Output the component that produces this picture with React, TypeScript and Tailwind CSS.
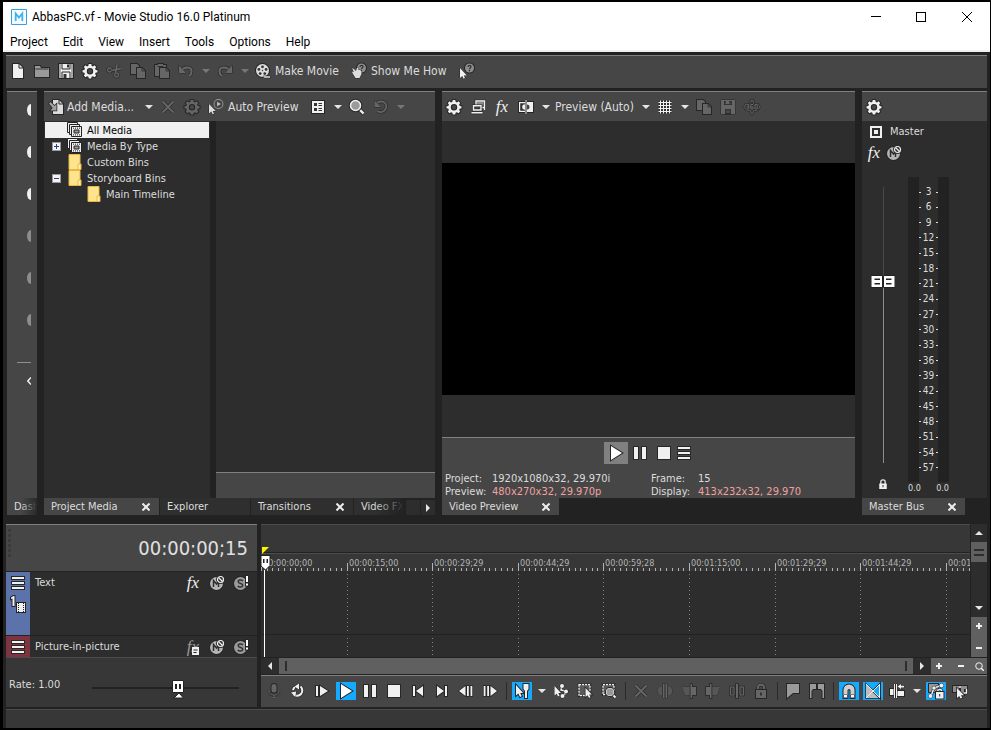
import React from 'react';
import clsx from 'clsx';

type IconProps = { children: React.ReactNode; className?: string };

const Icon = ({ children, className }: IconProps) => (
  <svg
    viewBox="0 0 16 16"
    aria-hidden="true"
    strokeWidth="2"
    className={clsx('size-4 shrink-0 overflow-visible fill-current stroke-[#262626] [paint-order:stroke]', className)}
  >
    {children}
  </svg>
);

const Line = ({ d, width = 1.5 }: { d: string; width?: number }) => (
  <>
    <path d={d} fill="none" strokeWidth={width + 1.6} opacity="0.7" />
    <path d={d} fill="none" stroke="currentColor" strokeWidth={width} />
  </>
);

const FileIcon = () => (
  <Icon>
    <path d="M3 1h6l4 4v10H3z" />
    <path d="M9 1v4h4" fill="none" stroke="#262626" strokeWidth="1" />
  </Icon>
);

const FolderIcon = () => (
  <Icon className="text-[#9a9a9a]">
    <path d="M1 3h5l1 2h8v9H1z" />
    <path d="M1.500 6h13" stroke="#333" strokeWidth="1" />
  </Icon>
);

const SaveIcon = () => (
  <Icon>
    <path d="M1 1h14v14H1z" />
    <path d="M1 1h2v14H1zM13 1h2v14h-2z" stroke="none" opacity="0.6" fill="#777" />
    <path d="M4 1v5h8V1M4 15V9h8v6" fill="none" stroke="#262626" strokeWidth="1" />
    <path d="M9 1.500h2v3H9zM5.500 11h3v4h-3z" fill="#333" stroke="none" />
  </Icon>
);

const GearIcon = () => (
  <Icon>
    <path
      fillRule="evenodd"
      d="M6.700 1h2.600l.3 1.800 1.300.6 1.600-1.100 1.700 1.700-1.100 1.600.6 1.300 1.800.3v2.100l-1.800.4-.6 1.300 1.100 1.600-1.700 1.700-1.600-1.100-1.300.6-.3 1.700H6.700l-.3-1.700-1.300-.6-1.600 1.100-1.700-1.700 1.100-1.600-.6-1.300L.5 9.300V7.200l1.800-.3.6-1.300L1.800 4l1.700-1.700 1.600 1.100 1.300-.6zM8 5a3.200 3.200 0 1 0 0 6.400A3.200 3.200 0 0 0 8 5z"
    />
  </Icon>
);

const CutIcon = () => (
  <Icon>
    <Line d="M3.500 5a2 2 0 1 0 .1 0M10.500 10a2 2 0 1 0 .1 0" width={1.3} />
    <Line d="M5.500 7.500l9.500-2M9.500 10L11 1.500" width={1.6} />
  </Icon>
);

const CopyIcon = () => (
  <Icon>
    <path d="M1 1h6l2 2v8H1z" />
    <path d="M7 5h5l3 3v7H7z" />
    <path d="M12 5v3h3" fill="none" stroke="#333" strokeWidth="1" />
  </Icon>
);

const PasteIcon = () => (
  <Icon>
    <path d="M1 2h3V1h5v1h3v11H1z" />
    <path d="M3.500 3.500h6" stroke="#333" strokeWidth="1" />
    <path d="M6 5h6l3 3v7H6z" />
    <path d="M12 5v3h3" fill="none" stroke="#333" strokeWidth="1" />
  </Icon>
);

const UndoIcon = ({ flip = false }: { flip?: boolean }) => (
  <Icon className={flip ? '-scale-x-100' : ''}>
    <Line d="M3.500 7.500C6 3 14 3.500 13.500 8.500c0 2-1 3.500-2.500 4.500" width={2} />
    <path d="M1 2.500V10h7z" strokeWidth="1" />
  </Icon>
);

const ReelIcon = () => (
  <Icon>
    <circle cx="7.500" cy="7.500" r="6.500" />
    <g fill="#333" stroke="none">
      <circle cx="7.500" cy="3.800" r="1.400" />
      <circle cx="11.100" cy="6.400" r="1.400" />
      <circle cx="9.800" cy="10.600" r="1.400" />
      <circle cx="5.200" cy="10.600" r="1.400" />
      <circle cx="3.900" cy="6.400" r="1.400" />
      <circle cx="7.500" cy="7.500" r="0.700" />
    </g>
    <path d="M8 13.200h7v1.600H9z" strokeWidth="1" />
  </Icon>
);

const QuestionBadge = () => (
  <>
    <circle cx="10.500" cy="5" r="4.500" fill="#8d8d8d" />
    <path d="M9 4c0-2 3-2 3-.2 0 1.200-1.500 1-1.500 2.500M10.500 7v1.200" fill="none" stroke="#2a2a2a" strokeWidth="1.200" />
  </>
);

const HandHelpIcon = () => (
  <Icon>
    <QuestionBadge />
    <path d="M1 5l2 1 2 2 1-3.500 1.500.5V7l1.500 0 1.500 1v3l-2 4H4.500L2 11 .8 8.500l2 .5z" strokeWidth="1" />
  </Icon>
);

const CursorHelpIcon = () => (
  <Icon>
    <QuestionBadge />
    <path d="M1 5v10l2.300-2 1.200 2.800 1.500-.7-1.200-2.600h3z" strokeWidth="1" />
  </Icon>
);

const AddMediaIcon = () => (
  <Icon>
    <path d="M5 1h6l4 4v10H5z" />
    <path d="M11 1v4h4" fill="none" stroke="#262626" strokeWidth="1" />
    <path d="M1 4.500l1.500-1.500L6.500 7 8.500 5v6.500H2.300L4.700 9z" fill="#a0a0a0" strokeWidth="1.500" />
  </Icon>
);

const CrossIcon = () => (
  <Icon>
    <Line d="M2.500 2.500l11 11M13.500 2.500l-11 11" width={1.8} />
  </Icon>
);

const AutoPreviewIcon = () => (
  <Icon>
    <circle cx="10.500" cy="5" r="4" fill="#444" stroke="#9a9a9a" strokeWidth="1.800" />
    <path d="M9.200 2.700v4.600l3.600-2.300z" fill="#c4c4c4" stroke="none" />
    <path d="M1 5v9.500l2.300-2 1.200 2.800 1.500-.7-1.200-2.600h3z" strokeWidth="1" />
  </Icon>
);

const ViewsIcon = () => (
  <Icon>
    <path d="M2 2h12v12H2z" />
    <path d="M4 4h3v3H4zM4 9h3v3H4zM8.500 4h3.500v1H8.500zM8.500 6h3.500v1H8.500zM8.500 9h3.500v1H8.500zM8.500 11h3.500v1H8.500z" fill="#333" stroke="none" />
  </Icon>
);

const MagnifierIcon = () => (
  <Icon>
    <Line d="M10.500 10.500L14.500 14.500" width={2.4} />
    <circle cx="6.500" cy="6.500" r="5" fill="#9a9a9a" stroke="#262626" strokeWidth="3.500" />
    <circle cx="6.500" cy="6.500" r="5" fill="none" stroke="currentColor" strokeWidth="1.500" />
  </Icon>
);

const ResetIcon = () => (
  <Icon>
    <Line d="M3 5.500C7-.5 15 3.500 13 9c-1 4-5.500 5-8.500 3" width={1.8} />
    <path d="M1.500 1.500V8H8z" strokeWidth="1" />
  </Icon>
);

const ExternalIcon = () => (
  <Icon>
    <Line d="M6 6V2h8.500v6.500H12M14.500 8.500v2.500" width={1.4} />
    <path fill="#8d8d8d" stroke="none" d="M7 3h6.500v3.500H7z" />
    <Line d="M3.500 6.700h7.500v4.300h-7.500zM1.500 13.800h11" width={1.4} />
  </Icon>
);

const SplitScreenIcon = () => (
  <Icon>
    <path d="M1 3h6v10H1zM9 3h6v10H9z" />
    <path d="M2.200 4.200H7v1a2.800 2.800 0 0 0 0 5.600v1H2.200z" fill="#333" stroke="none" />
    <path d="M9 5.500a2.500 2.500 0 0 1 0 5z" fill="#444" stroke="none" />
    <path d="M7.500 1h1v14h-1z" strokeWidth="1" />
  </Icon>
);

const GridIcon = () => (
  <Icon>
    <Line d="M3.500 1.500v13M6.500 1.500v13M9.500 1.500v13M12.500 1.500v13M1.500 3.500h13M1.500 6.500h13M1.500 9.500h13M1.500 12.500h13" width={1} />
  </Icon>
);

const Icon360 = () => (
  <Icon>
    <Line d="M8 1c3 1.500 3 12.500 0 14-3-1.500-3-12.500 0-14" width={1} />
    <Line d="M2 5C0 7 0 10 4 11.500h2M14 5c2 2 2 5-2 6.500h-2" width={1} />
    <Line d="M2.500 5.500h2.200v4.500H2.500M3 7.800h1.700M9 5.500H6.800V10H9V7.800H7M11 5.500h2.200V10H11z" width={1} />
  </Icon>
);

const PlayIcon = () => (
  <Icon className="text-white">
    <path d="M3 1l11 7-11 7z" />
  </Icon>
);

const PauseIcon = () => (
  <Icon>
    <path d="M2 2h4v12H2zM10 2h4v12h-4z" />
  </Icon>
);

const StopIcon = () => (
  <Icon>
    <path d="M2 2h12v12H2z" />
  </Icon>
);

const MenuIcon = () => (
  <Icon>
    <path d="M2 2h12v2H2zM2 7h12v2H2zM2 12h12v2H2z" />
  </Icon>
);

const MicIcon = () => (
  <Icon>
    <rect x="5.500" y="1" width="5" height="8.500" rx="2.500" />
    <Line d="M3 6.500v1.500c0 5.500 10 5.500 10 0V6.500M8 12.500V15M5 14.800h6" width={1} />
  </Icon>
);

const LoopIcon = () => (
  <Icon>
    <Line d="M10.500 3.500a5.300 5.300 0 1 1-7 8M5.500 3.500A5.500 5.500 0 0 0 3 7" width={2} />
    <path d="M1 9.500l5-1-.5 5.500zM9 .5v6L4.500 3.500z" strokeWidth="1" />
  </Icon>
);

const PlayFromStartIcon = () => (
  <Icon>
    <path d="M2 3h2v10H2zM6 3l8 5-8 5z" />
  </Icon>
);

const GoStartIcon = ({ flip = false }: { flip?: boolean }) => (
  <Icon className={flip ? '-scale-x-100' : ''}>
    <path d="M3 3h2v10H3zM13 3v10L6 8z" />
  </Icon>
);

const FrameIcon = ({ flip = false }: { flip?: boolean }) => (
  <Icon className={flip ? '-scale-x-100' : ''}>
    <path d="M1 8l6.500-5v10zM9 3h1.800v10H9zM12.500 3h1.800v10h-1.800z" strokeWidth="1.500" />
  </Icon>
);

const EditToolIcon = () => (
  <Icon>
    <path d="M2 2v10.500l2.300-2L6 14l1.700-.8L6.200 10h3z" />
    <path d="M9.500 1h5v5L13 8v7h-2V8L9.500 6z" />
  </Icon>
);

const EnvelopeToolIcon = () => (
  <Icon>
    <Line d="M9 3l-1 4 6 1.500-3.500 4" width={1.5} />
    <g strokeWidth="1">
      <circle cx="9" cy="3" r="2" />
      <circle cx="13" cy="8.500" r="2" />
      <circle cx="9.500" cy="13" r="2" />
      <path d="M1.500 3v9.500l2.200-1.800L5 13.500l1.600-.8L5.300 10H8z" />
    </g>
  </Icon>
);

const SelectToolIcon = () => (
  <Icon>
    <path d="M2 1.700h11v11H2z" fill="#5a5a5a" stroke="#262626" strokeWidth="2.500" />
    <path d="M2 1.700h11v11H2z" fill="none" stroke="currentColor" strokeWidth="1.300" strokeDasharray="2 1" />
    <path d="M8.500 5v9l2-1.700L12 15l1.500-.8-1.300-2.700h2.600z" strokeWidth="1.500" />
  </Icon>
);

const ZoomToolIcon = () => (
  <Icon>
    <path d="M2 1.700h11v10H2z" fill="#5a5a5a" stroke="#262626" strokeWidth="2.500" />
    <path d="M2 1.700h11v10H2z" fill="none" stroke="currentColor" strokeWidth="1.300" strokeDasharray="2 1" />
    <Line d="M11.500 11.500l3 3" width={2} />
    <circle cx="9" cy="9" r="3.500" fill="#999" stroke="#262626" strokeWidth="3" />
    <circle cx="9" cy="9" r="3.500" fill="#999" stroke="currentColor" strokeWidth="1.200" />
  </Icon>
);

const TrimIcon = () => (
  <Icon>
    <path d="M1 6l2-2.500h2.500v9H3L1 10zM15 6l-2-2.500h-2.500v9H13l2-2.500z" opacity="0.5" strokeWidth="1" />
    <path d="M6 1h1.500v14H6zM8.500 1H10v14H8.500z" strokeWidth="1" />
  </Icon>
);

const TrimEndIcon = ({ flip = false }: { flip?: boolean }) => (
  <Icon className={flip ? '-scale-x-100' : ''}>
    <path d="M1 4h8v8H4z" opacity="0.5" strokeWidth="1" />
    <path d="M9.500 1H11v3h4v8h-4v3H9.500z" strokeWidth="1.500" />
  </Icon>
);

const SplitIcon = () => (
  <Icon>
    <Line d="M5 4H1.500v8H5zM11 4h3.500v8H11z" width={1} />
    <path d="M7 1h2v14H7z" strokeWidth="1.500" />
  </Icon>
);

const LockIcon = () => (
  <Icon>
    <Line d="M5 7.500V4c0-3 6-3 6 0v3.500" width={1.8} />
    <path fillRule="evenodd" d="M3 7h10v8H3zM7.200 9.500v3h1.600v-3z" />
  </Icon>
);

const MarkerIcon = () => (
  <Icon className="text-[#9a9a9a]">
    <path d="M2 1h12v9H8l-6 5z" />
  </Icon>
);

const RegionIcon = () => (
  <Icon className="text-[#9a9a9a]">
    <path d="M1 1h6v5H4L2.500 8v7H1zM9 1h6v14h-1.500V8L12 6H9z" />
  </Icon>
);

const SnapIcon = () => (
  <Icon className="text-[#cfcfcf]">
    <path d="M2.500 15V7a5.500 5.500 0 0 1 11 0v8h-4V7.500a1.500 1.500 0 0 0-3 0V15z" />
    <path d="M3 12h3v2.500H3zM10 12h3v2.500h-3z" fill="#fff" strokeWidth="1" />
  </Icon>
);

const CrossfadeIcon = () => (
  <Icon>
    <path d="M1 1l14 14H1zM15 1v14L8 8z" fill="#bdbdbd" strokeWidth="1.500" />
    <path d="M15 1v14L8 8z" fill="#14aaff" />
    <path d="M1 15L15 1M1 1l14 14M14.500 1v14" fill="none" stroke="#eee" strokeWidth="1" />
  </Icon>
);

const RippleIcon = () => (
  <Icon>
    <path d="M1 6h4v6H1zM7 8h8v5H7z" />
    <path d="M5 1h1v14H5zM7 1h1v14H7z" strokeWidth="1" />
    <path d="M8.500 3.500L12 1v1.700h3v1.800h-3V6z" strokeWidth="1" />
  </Icon>
);

const LockEnvelopesIcon = () => (
  <Icon>
    <path d="M1 1h9v8H1z" fill="#999" />
    <Line d="M3 13L6 5l7-2.500" width={1.5} />
    <g strokeWidth="1">
      <circle cx="2.500" cy="13" r="2" />
      <circle cx="6" cy="5" r="1.800" />
      <circle cx="13.500" cy="2.500" r="2" />
    </g>
    <Line d="M9.700 9.500V8c0-2 4-2 4 0v1.500" width={1.3} />
    <path d="M8 9h7.500v6.500H8z" />
    <path d="M11.200 11h1v2.500h-1z" fill="#333" stroke="none" />
  </Icon>
);

const IgnoreGroupingIcon = () => (
  <Icon>
    <path d="M1 3h6v6H1zM9 3h6v3h-3v5H9z" fill="#8d8d8d" />
    <Line d="M7 4h2M7 9h2M12 10h2.500V6" width={1.3} />
    <path d="M5 5v10l2.200-2L8.500 15.500l1.700-.8L9 12.200h3z" strokeWidth="1.500" />
  </Icon>
);

const MuteIcon = () => (
  <Icon className="text-[#b5b5b5]">
    <circle cx="7.500" cy="8.500" r="6.500" />
    <path d="M4.500 12V5.500L7.500 9l2-2.500V12" fill="none" stroke="#2d2d2d" strokeWidth="1.500" />
    <circle cx="11.500" cy="4.500" r="3" fill="#2d2d2d" stroke="#2d2d2d" strokeWidth="3" />
    <circle cx="11.500" cy="4.500" r="3" fill="none" stroke="#eee" strokeWidth="1.200" />
    <path d="M9.500 2.500l4 4" stroke="#eee" strokeWidth="1.200" />
  </Icon>
);

const SoloIcon = () => (
  <Icon className="text-[#9a9a9a]">
    <circle cx="7.500" cy="8.500" r="6.500" />
    <path d="M10 6C8.500 4.500 5 4.700 5.200 6.800 5.400 9 10 8 9.800 10.300 9.700 12.500 6 12.500 4.700 11" fill="none" stroke="#333" strokeWidth="1.500" />
    <path d="M13 1h2v6h-2zM13 8.500h2v2h-2z" fill="#fff" />
  </Icon>
);

const Fx = ({ dim = false }: { dim?: boolean }) => (
  <span className={clsx('font-[Liberation_Serif,serif] text-[17px] leading-4 italic', dim ? 'text-[#999]' : 'text-[#f0f0f0]')}>
    fx
  </span>
);

const StackIcon = () => (
  <Icon>
    <g fill="#f0f0f0" stroke="#222" strokeWidth="1" className="[paint-order:normal]">
      <path d="M.5.5h10v10H.5z" />
      <path d="M2.500 2.500h10v10h-10z" />
      <path d="M4.500 4.500h10v10h-10z" />
      <path d="M7 8h5v3H7z" fill="#999" />
    </g>
    <path d="M6 6.200h7M6 12.900h7" stroke="#222" strokeDasharray="1 1" strokeWidth="1" />
  </Icon>
);

const BinIcon = () => (
  <svg viewBox="0 0 16 16" aria-hidden="true" className="size-4 shrink-0">
    <path d="M2 .5h11v15H2z" fill="#ffe48f" stroke="#e8b93c" />
    <path d="M11 10h3v5.500h-3z" fill="#fff0b8" stroke="#e8b93c" />
  </svg>
);

const Caret = ({ dim = false, className }: { dim?: boolean; className?: string }) => (
  <svg viewBox="0 0 8 4" aria-hidden="true" className={clsx('h-1 w-2', dim ? 'fill-[#777]' : 'fill-[#e6e6e6]', className)}>
    <path d="M0 0h8L4 4z" />
  </svg>
);

type ToolButtonProps = {
  label: string;
  children: React.ReactNode;
  dim?: boolean;
  active?: boolean;
};

const ToolButton = ({ label, children, dim, active }: ToolButtonProps) => (
  <button
    type="button"
    aria-label={label}
    disabled={dim}
    className={clsx('flex h-6 w-6 shrink-0 items-center justify-center', dim ? 'text-[#666]' : 'text-[#f0f0f0]')}
  >
    <span className={clsx('flex h-[18px] w-5 items-center justify-center', active && 'bg-[#14aaff]')}>{children}</span>
  </button>
);

const CaretButton = ({ label, dim }: { label: string; dim?: boolean }) => (
  <button type="button" aria-label={label} disabled={dim} className="flex h-6 w-[15px] shrink-0 items-center justify-center">
    <Caret dim={dim} />
  </button>
);

const Separator = () => (
  <div className="flex h-[18px] w-2 shrink-0 justify-center">
    <div className="w-px bg-[#2a2a2a]" />
  </div>
);

const PanelBar = ({ children }: { children?: React.ReactNode }) => (
  <div className="flex h-[30px] shrink-0 items-center overflow-hidden border-t border-[#808080] bg-[#464646] text-xs text-[#dcdcdc]">
    {children}
  </div>
);

const TabClose = ({ label }: { label: string }) => (
  <button type="button" aria-label={label} className="flex size-3 items-center justify-center text-[#ededed]">
    <svg viewBox="0 0 8 8" aria-hidden="true" className="size-2 fill-none stroke-current" strokeWidth="2">
      <path d="M.5.5l7 7M7.500.5l-7 7" />
    </svg>
  </button>
);

type TabProps = { name: string; active?: boolean; closable?: boolean; className?: string };

const Tab = ({ name, active, closable, className }: TabProps) => (
  <div
    className={clsx(
      'flex h-[17px] items-center justify-between overflow-hidden px-[7px] text-[11px] leading-4 whitespace-nowrap text-[#dcdcdc]',
      active ? 'bg-[#464646]' : 'bg-[#2f2f2f]',
      className,
    )}
  >
    <button type="button" className="pt-px">
      {name}
    </button>
    {closable && <TabClose label={`Close ${name}`} />}
  </div>
);

const TitleBar = () => (
  <header className="shrink-0 border-b-2 border-[#f0f0f0] bg-white font-[Roboto,sans-serif] text-xs text-black">
    <div className="flex h-[29px] items-center pl-2">
      <svg viewBox="0 0 16 16" aria-hidden="true" className="size-4">
        <path d="M.5.5h15v15H.5z" fill="#f4fbff" stroke="#3d9be0" />
        <path d="M4.700 12V4.500L8 8.500l3.300-4V12" fill="none" stroke="#3db4ea" strokeWidth="1.800" />
      </svg>
      <h1 className="ml-[5px] flex-1">AbbasPC.vf - Movie Studio 16.0 Platinum</h1>
      <button type="button" aria-label="Minimize" className="flex h-full w-[45px] items-center justify-center">
        <span className="h-px w-2.5 bg-black" />
      </button>
      <button type="button" aria-label="Maximize" className="flex h-full w-[45px] items-center justify-center">
        <span className="size-2.5 border border-black" />
      </button>
      <button type="button" aria-label="Close" className="flex h-full w-[47px] items-center justify-center">
        <svg viewBox="0 0 10 10" aria-hidden="true" className="size-2.5 fill-none stroke-black">
          <path d="M0 0l10 10M10 0L0 10" />
        </svg>
      </button>
    </div>
    <nav className="flex h-[19px] items-center gap-[15px] pt-0.5 pl-[7px]">
      {['Project', 'Edit', 'View', 'Insert', 'Tools', 'Options', 'Help'].map((item) => (
        <button key={item} type="button">
          {item}
        </button>
      ))}
    </nav>
  </header>
);

const MainToolbar = () => (
  <div className="flex h-[33px] shrink-0 items-center border-t border-[#808080] bg-[#464646] pb-0.5 text-xs text-[#dcdcdc]">
    <ToolButton label="New"><FileIcon /></ToolButton>
    <ToolButton label="Open"><FolderIcon /></ToolButton>
    <ToolButton label="Save"><SaveIcon /></ToolButton>
    <ToolButton label="Properties"><GearIcon /></ToolButton>
    <ToolButton label="Cut" dim><CutIcon /></ToolButton>
    <ToolButton label="Copy" dim><CopyIcon /></ToolButton>
    <ToolButton label="Paste" dim><PasteIcon /></ToolButton>
    <ToolButton label="Undo" dim><UndoIcon /></ToolButton>
    <CaretButton label="Undo history" dim />
    <ToolButton label="Redo" dim><UndoIcon flip /></ToolButton>
    <CaretButton label="Redo history" dim />
    <button type="button" className="flex w-[95px] items-center gap-1 pl-[3px] whitespace-nowrap">
      <ReelIcon /> Make Movie
    </button>
    <button type="button" className="flex w-[108px] items-center gap-1 pl-1 whitespace-nowrap">
      <HandHelpIcon /> Show Me How
    </button>
    <ToolButton label="What's this"><CursorHelpIcon /></ToolButton>
  </div>
);

const dockItems = [true, true, true, false, false, false];

const Dock = () => (
  <section className="ml-px flex w-[30px] shrink-0 flex-col">
    <div className="flex flex-1 flex-col items-end border-t border-[#808080] bg-[#464646] pt-3 pr-1.5">
      {dockItems.map((on, i) => (
        <button
          key={i}
          type="button"
          aria-label={`Dashboard item ${i + 1}`}
          className={clsx('mb-[30px] h-3 w-1 rounded-[100%_0_0_100%/50%]', on ? 'bg-[#f0f0f0]' : 'bg-[#8d8d8d]')}
        />
      ))}
      <div className="mt-1.5 h-px w-3.5 bg-[#909090]" />
      <svg viewBox="0 0 4 8" aria-hidden="true" className="mt-[14px] h-2 w-1 fill-none stroke-[#f0f0f0]">
        <path d="M4 .5L.8 4 4 7.500" strokeWidth="1.500" />
      </svg>
    </div>
    <div className="relative">
      <Tab name="Dash" active />
      <div className="absolute inset-y-0 right-0 w-4 bg-linear-to-r from-transparent to-[#2a2a2a]" />
    </div>
  </section>
);

const Expander = ({ open }: { open: boolean }) => (
  <button
    type="button"
    aria-label={open ? 'Collapse' : 'Expand'}
    className="flex size-[9px] items-center justify-center border border-[#999] bg-[#f4f4f4] text-[#2d3f8f]"
  >
    <svg viewBox="0 0 5 5" aria-hidden="true" className="size-[5px] fill-current">
      <path d={open ? 'M0 2h5v1H0z' : 'M0 2h5v1H0zM2 0h1v5H2z'} />
    </svg>
  </button>
);

type Bin = { name: string; icon: 'stack' | 'bin'; state?: 'open' | 'closed'; selected?: boolean; nested?: boolean };

const bins: Bin[] = [
  { name: 'All Media', icon: 'stack', selected: true },
  { name: 'Media By Type', icon: 'stack', state: 'closed' },
  { name: 'Custom Bins', icon: 'bin' },
  { name: 'Storyboard Bins', icon: 'bin', state: 'open' },
  { name: 'Main Timeline', icon: 'bin', nested: true },
];

const ProjectMedia = () => (
  <section className="flex min-w-0 flex-[391] flex-col">
    <PanelBar>
      <button type="button" className="flex w-[97px] shrink-0 items-center gap-[3px] pl-1 whitespace-nowrap">
        <AddMediaIcon /> Add Media...
      </button>
      <CaretButton label="Add media options" />
      <ToolButton label="Remove" dim><CrossIcon /></ToolButton>
      <ToolButton label="Media properties" dim><GearIcon /></ToolButton>
      <button type="button" className="flex w-[102px] shrink-0 items-center gap-1 pl-1 whitespace-nowrap">
        <AutoPreviewIcon /> Auto Preview
      </button>
      <ToolButton label="Views"><ViewsIcon /></ToolButton>
      <CaretButton label="View options" />
      <ToolButton label="Search"><MagnifierIcon /></ToolButton>
      <ToolButton label="Reset" dim><ResetIcon /></ToolButton>
      <CaretButton label="Reset options" dim />
    </PanelBar>
    <div className="grid flex-1 grid-cols-[166fr_219fr] gap-1.5">
      <ul className="bg-[#2d2d2d] px-px pt-px text-[11px] leading-4 text-[#dcdcdc]">
        {bins.map((bin) => (
          <li
            key={bin.name}
            className={clsx('flex h-4 items-center', bin.selected && 'bg-[#f0f0f0] text-black', bin.nested ? 'pl-[41px]' : 'pl-[7px]')}
          >
            {!bin.nested && <span className="w-[15px]">{bin.state && <Expander open={bin.state === 'open'} />}</span>}
            {bin.icon === 'stack' ? <StackIcon /> : <BinIcon />}
            <span className="ml-1 pt-0.5">{bin.name}</span>
          </li>
        ))}
      </ul>
      <div className="flex flex-col bg-[#2d2d2d]">
        <div className="flex-1" />
        <div className="h-[26px] border-t border-[#808080] bg-[#464646]" />
      </div>
    </div>
    <div className="flex gap-px">
      <Tab name="Project Media" active closable className="w-[115px] shrink-0" />
      <Tab name="Explorer" className="w-[90px] shrink-0" />
      <Tab name="Transitions" closable className="w-[102px] shrink-0" />
      <div className="relative flex min-w-0 flex-1">
        <Tab name="Video FX" className="w-[50px]" />
        <div className="absolute inset-y-0 left-5 w-[30px] bg-linear-to-r from-transparent to-[#222]" />
      </div>
      <button type="button" aria-label="Scroll tabs left" className="mt-[2px] h-[15px] w-3.5 bg-[#2d2d2d]" />
      <button type="button" aria-label="Scroll tabs right" className="mt-[2px] flex h-[15px] w-3.5 items-center justify-center bg-[#2d2d2d]">
        <Caret className="-rotate-90" />
      </button>
    </div>
  </section>
);

const VideoPreview = () => (
  <section className="flex min-w-0 flex-[413] flex-col">
    <PanelBar>
      <ToolButton label="Project video properties"><GearIcon /></ToolButton>
      <ToolButton label="External monitor"><ExternalIcon /></ToolButton>
      <ToolButton label="Video output FX"><Fx /></ToolButton>
      <ToolButton label="Split screen view"><SplitScreenIcon /></ToolButton>
      <CaretButton label="Split screen options" />
      <button type="button" className="w-[85px] shrink-0 pl-0.5 text-left whitespace-nowrap">Preview (Auto)</button>
      <CaretButton label="Preview quality" />
      <ToolButton label="Overlays"><GridIcon /></ToolButton>
      <CaretButton label="Overlay options" />
      <ToolButton label="Copy snapshot" dim><CopyIcon /></ToolButton>
      <ToolButton label="Save snapshot" dim>
        <Icon>
          <path fillRule="evenodd" d="M1 1h14v14H1zM4 2v4h8V2zM5 10v5h6v-5z" strokeWidth="1" />
          <path d="M6 2h3v3H6z" stroke="none" />
        </Icon>
      </ToolButton>
      <ToolButton label="360 preview" dim><Icon360 /></ToolButton>
    </PanelBar>
    <div className="flex flex-1 items-center bg-[#2d2d2d]">
      <div className="aspect-[413/232] w-full bg-black" />
    </div>
    <div className="flex h-[61px] flex-col border-t border-[#808080] bg-[#464646] text-[11px] leading-[13px] text-[#dcdcdc]">
      <div className="flex items-center justify-center pt-[3px] pr-px text-[#f0f0f0]">
        <button type="button" aria-label="Play" className="flex h-[22px] w-6 items-center justify-center bg-[#808080]"><PlayIcon /></button>
        <ToolButton label="Pause"><PauseIcon /></ToolButton>
        <ToolButton label="Stop"><StopIcon /></ToolButton>
        <button type="button" aria-label="More" className="flex w-4 justify-center"><MenuIcon /></button>
      </div>
      <dl className="grid grid-cols-[47px_159px_47px_1fr] pt-[7px] pl-[3px] whitespace-nowrap">
        <dt>Project:</dt>
        <dd>1920x1080x32, 29.970i</dd>
        <dt>Frame:</dt>
        <dd>15</dd>
        <dt>Preview:</dt>
        <dd className="text-[#f0a0a0]">480x270x32, 29.970p</dd>
        <dt>Display:</dt>
        <dd className="text-[#f0a0a0]">413x232x32, 29.970</dd>
      </dl>
    </div>
    <Tab name="Video Preview" active closable className="w-[117px]" />
  </section>
);

const levels = Array.from({ length: 19 }, (_, i) => (i + 1) * 3);

const MasterBus = () => (
  <section className="flex w-[125px] shrink-0 flex-col">
    <PanelBar>
      <ToolButton label="Master properties"><GearIcon /></ToolButton>
    </PanelBar>
    <div className="flex flex-1 flex-col bg-[#2d2d2d] pt-px text-[#dcdcdc]">
      <div className="flex h-5 items-center gap-2 pl-2 text-[11px]">
        <svg viewBox="0 0 12 12" aria-hidden="true" className="size-3 fill-[#f0f0f0]">
          <path fillRule="evenodd" d="M0 0h12v12H0zM2 2v8h8V2zM4 4h4v4H4z" />
        </svg>
        <span className="pt-px">Master</span>
      </div>
      <div className="flex h-[22px] items-center">
        <ToolButton label="Master FX"><Fx /></ToolButton>
        <button type="button" aria-label="Mute master"><MuteIcon /></button>
      </div>
      <div className="flex flex-1 pt-[13px]">
        <div className="flex w-[46px] flex-col items-center pr-1 pb-[9px]">
          <label className="relative mt-2.5 flex w-6 flex-1 justify-center">
            <span className="w-px bg-[#484848]" />
            <span className="absolute top-[36%] bottom-0 w-px bg-[#8d8d8d]" />
            <svg viewBox="0 0 24 13" aria-hidden="true" className="absolute top-[32%] h-[13px] w-6">
              <path d="M0 .5h11.500v12H0zM12.500.5H24v12H12.500z" fill="#fff" stroke="#222" />
              <path d="M3.500 3.500H9V5H3.500zM3.500 8H9v1.500H3.500zM15 3.500h5.500V5H15zM15 8h5.500v1.500H15z" fill="#222" />
            </svg>
            <input
              type="range"
              aria-label="Master volume"
              defaultValue={67}
              className="absolute inset-0 m-0 h-full w-full opacity-0 [direction:rtl] [writing-mode:vertical-lr]"
            />
          </label>
          <button type="button" aria-label="Lock faders" className="mt-4 text-[#f0f0f0]">
            <svg viewBox="0 0 16 16" aria-hidden="true" className="h-2.5 w-2.5 fill-current">
              <path d="M4.500 8V4.500c0-4 7-4 7 0V8" fill="none" stroke="currentColor" strokeWidth="2" />
              <path fillRule="evenodd" d="M2 7h12v9H2zM7.200 9.500v3.500h1.600V9.500z" />
            </svg>
          </button>
        </div>
        <div className="flex flex-col text-[10px] leading-3">
          <div className="flex flex-1">
            <div className="w-[11px] bg-[#222]" />
            <ol className="flex w-[19px] flex-col justify-between pt-[9px] pb-2">
              {levels.map((level) => (
                <li key={level} className="flex items-center justify-between">
                  <span className="h-px w-0.5 bg-[#dcdcdc]" />
                  {level}
                  <span className="h-px w-0.5 bg-[#dcdcdc]" />
                </li>
              ))}
            </ol>
            <div className="w-[11px] bg-[#222]" />
          </div>
          <div className="flex h-4 justify-between text-[9px]">
            <span>0.0</span>
            <span>0.0</span>
          </div>
        </div>
      </div>
    </div>
    <Tab name="Master Bus" active closable className="w-[103px]" />
  </section>
);

type TrackProps = { name: string; children?: React.ReactNode; tall?: boolean };

const Track = ({ name, children, tall }: TrackProps) => (
  <div className={clsx('flex bg-[#2d2d2d]', tall ? 'h-16 border-b border-[#222]' : 'h-[21px]')}>
    <div className={clsx('flex w-6 shrink-0 flex-col items-center pt-[3px] text-[#f0f0f0]', tall ? 'bg-[#5b73aa]' : 'bg-[#7f3340]')}>
      <MenuIcon />
      {tall && (
        <svg viewBox="0 0 18 18" aria-hidden="true" className="mt-1 size-[18px] fill-[#f0f0f0] stroke-[#222] [paint-order:stroke]" strokeWidth="2">
          <path d="M2 2.500L4.500 1h1v10h-2V3.500L2 4z" />
          <path d="M8 8h8v9H8z" />
          <path d="M9.500 8v9M14.500 8v9" strokeWidth="1" strokeDasharray="1 1" />
        </svg>
      )}
    </div>
    <span className="flex-1 pt-1 pl-[5px] text-[11px] leading-[14px] text-[#dcdcdc]">{name}</span>
    <div className="flex h-[22px] items-center pr-1">
      <ToolButton label={`${name} FX`}>{children}</ToolButton>
      <ToolButton label={`Mute ${name}`}><MuteIcon /></ToolButton>
      <ToolButton label={`Solo ${name}`}><SoloIcon /></ToolButton>
    </div>
  </div>
);

const TrackList = () => (
  <div className="flex w-[251px] shrink-0 flex-col">
    <div className="flex h-[47px] items-center justify-between border-t border-[#808080] bg-[#464646] pr-[9px] pl-0.5">
      <div className="flex flex-col gap-0.5 self-start pt-1">
        {[0, 1, 2, 3, 4, 5].map((dot) => (
          <span key={dot} className="size-[3px] rounded-full border border-[#303030]" />
        ))}
      </div>
      <span className="text-xl text-[#e0e0e0]">00:00:00;15</span>
    </div>
    <div className="border-t border-[#222]">
      <Track name="Text" tall>
        <Fx />
      </Track>
      <Track name="Picture-in-picture">
        <span className="relative flex">
          <Fx dim />
          <svg viewBox="0 0 7 8" aria-hidden="true" className="absolute right-0 bottom-0 h-2 w-[7px]">
            <path d="M0 0h7v8H0z" fill="#f0f0f0" />
            <path d="M1.500 3h4M1.500 5.500h3" stroke="#222" />
          </svg>
        </span>
      </Track>
    </div>
    <div className="flex flex-1 items-start border-t border-[#4c4c4c] bg-[#373737] pt-[19px] pl-[3px] text-[11px] leading-4 text-[#dcdcdc]">
      <span className="w-[83px]">Rate: 1.00</span>
      <label className="relative mt-2.5 block h-0.5 w-[147px] bg-[#222]">
        <svg viewBox="0 0 14 20" aria-hidden="true" className="absolute -top-2 left-[79px] h-5 w-3.5">
          <path d="M1.500 1.500h11v12h-11z" fill="#fff" stroke="#222" />
          <path d="M4 5h2v5H4zM8 5h2v5H8z" fill="#222" />
          <path d="M3 19l5-5 4.500 5z" fill="#fff" stroke="#222" />
        </svg>
        <input type="range" aria-label="Playback rate" className="absolute -top-2 left-0 m-0 h-5 w-full opacity-0" />
      </label>
    </div>
  </div>
);

const segments = [
  { time: '00:00:00;00', width: 86 },
  { time: '00:00:15;00', width: 85 },
  { time: '00:00:29;29', width: 86 },
  { time: '00:00:44;29', width: 85 },
  { time: '00:00:59;28', width: 86 },
  { time: '00:01:15;00', width: 86 },
  { time: '00:01:29;29', width: 85 },
  { time: '00:01:44;29', width: 86 },
  { time: '00:01:59;28', width: 85 },
];

const TimelineBody = () => (
  <div className="relative min-w-0 flex-1 overflow-hidden bg-[#2d2d2d]">
    <div className="h-[29px] border-t border-b border-t-[#4c4c4c] border-b-[#222] bg-[#373737]" />
    <div className="flex">
      {segments.map((segment, i) => (
        <div key={segment.time} className="shrink-0" style={{ width: segment.width }}>
          <div className="relative h-[18px] border-t border-[#4c4c4c] bg-[#373737]">
            <span className="block pt-1 pl-0.5 text-[9px] leading-[11px] text-[#b4b4b4]">{segment.time}</span>
            <svg aria-hidden="true" className="absolute inset-0 h-[17px] w-full fill-[#b4b4b4]">
              {Array.from({ length: 15 }, (_, t) => (
                <rect
                  key={t}
                  x={Math.round((t * segment.width) / 15)}
                  y={t === 0 ? 9 : 14}
                  width="1"
                  height={t === 0 ? 8 : 3}
                />
              ))}
            </svg>
          </div>
          <div className="h-[86px]">
            {i > 0 && <div className="h-full w-px bg-[repeating-linear-gradient(to_bottom,transparent_0_3px,#858585_3px_4px)]" />}
          </div>
        </div>
      ))}
    </div>
    <div className="absolute inset-x-0 bottom-[22px] h-px bg-[#222]" />
    <svg viewBox="0 0 10 111" aria-hidden="true" className="absolute bottom-0 left-0 h-[111px] w-2.5">
      <path d="M1 1h7L1 8z" fill="#fff200" />
      <path d="M3 24h1v87H3z" fill="#fff" />
      <path d="M0 9.500h9v10L4.500 24 0 20z" fill="#fff" stroke="#222" />
      <path d="M2 13h1.500v4H2zM5.500 13H7v4H5.500z" fill="#222" />
    </svg>
  </div>
);

const Sign = ({ plus }: { plus?: boolean }) => (
  <svg viewBox="0 0 6 6" aria-hidden="true" className="size-1.5 fill-[#f0f0f0]">
    <path d={plus ? 'M0 2h6v2H0zM2 0h2v6H2z' : 'M0 2h6v2H0z'} />
  </svg>
);

const VerticalScroll = () => (
  <div className="ml-px flex w-4 shrink-0 flex-col items-center bg-[#2d2d2d] text-white">
    <button type="button" aria-label="Scroll up" className="flex h-[18px] w-full items-center justify-center">
      <Caret className="rotate-180" />
    </button>
    <div className="flex h-5 w-full flex-col items-center justify-center gap-[3px] bg-[#606060]">
      <span className="h-0.5 w-2.5 bg-[#2d2d2d]" />
      <span className="h-0.5 w-2.5 bg-[#2d2d2d]" />
    </div>
    <div className="flex-1" />
    <button type="button" aria-label="Scroll down" className="flex h-[18px] w-full items-center justify-center">
      <Caret />
    </button>
    <div className="flex h-10 w-full flex-col items-center justify-between bg-[#606060] py-1.5">
      <button type="button" aria-label="Zoom tracks in">
        <Sign plus />
      </button>
      <button type="button" aria-label="Zoom tracks out">
        <Sign />
      </button>
    </div>
  </div>
);

const HorizontalScroll = () => (
  <div className="mt-px flex h-4 bg-[#2d2d2d]">
    <button type="button" aria-label="Scroll left" className="flex w-[18px] items-center justify-center">
      <Caret className="rotate-90" />
    </button>
    <div className="flex flex-1 items-center justify-between bg-[#606060] px-1.5">
      <span className="h-2.5 w-0.5 bg-[#2d2d2d]" />
      <span className="h-2.5 w-0.5 bg-[#2d2d2d]" />
    </div>
    <button type="button" aria-label="Scroll right" className="flex w-[18px] items-center justify-center">
      <Caret className="-rotate-90" />
    </button>
    <div className="flex w-14 items-center bg-[#606060] pl-[5px]">
      <button type="button" aria-label="Zoom in"><Sign plus /></button>
      <button type="button" aria-label="Zoom out" className="ml-4"><Sign /></button>
      <button type="button" aria-label="Zoom tool" className="ml-[11px]">
        <svg viewBox="0 0 9 9" aria-hidden="true" className="size-[9px] fill-none stroke-[#f0f0f0]">
          <circle cx="4" cy="4" r="3.300" />
          <path d="M6 6l3 3" strokeWidth="1.500" />
        </svg>
      </button>
    </div>
  </div>
);

const TransportBar = () => (
  <div className="mt-px flex flex-1 items-center border-t border-[#808080] bg-[#464646] pb-px pl-px">
    <ToolButton label="Record" dim><MicIcon /></ToolButton>
    <ToolButton label="Loop playback"><LoopIcon /></ToolButton>
    <ToolButton label="Play from start"><PlayFromStartIcon /></ToolButton>
    <ToolButton label="Play" active><PlayIcon /></ToolButton>
    <ToolButton label="Pause"><PauseIcon /></ToolButton>
    <ToolButton label="Stop"><StopIcon /></ToolButton>
    <ToolButton label="Go to start"><GoStartIcon /></ToolButton>
    <ToolButton label="Go to end"><GoStartIcon flip /></ToolButton>
    <ToolButton label="Previous frame"><FrameIcon /></ToolButton>
    <ToolButton label="Next frame"><FrameIcon flip /></ToolButton>
    <Separator />
    <ToolButton label="Normal edit tool" active><EditToolIcon /></ToolButton>
    <CaretButton label="Edit tool options" />
    <ToolButton label="Envelope edit tool"><EnvelopeToolIcon /></ToolButton>
    <ToolButton label="Selection edit tool"><SelectToolIcon /></ToolButton>
    <ToolButton label="Zoom edit tool"><ZoomToolIcon /></ToolButton>
    <Separator />
    <ToolButton label="Delete" dim><CrossIcon /></ToolButton>
    <ToolButton label="Trim" dim><TrimIcon /></ToolButton>
    <ToolButton label="Trim start" dim><TrimEndIcon /></ToolButton>
    <ToolButton label="Trim end" dim><TrimEndIcon flip /></ToolButton>
    <ToolButton label="Split" dim><SplitIcon /></ToolButton>
    <ToolButton label="Lock" dim><LockIcon /></ToolButton>
    <Separator />
    <ToolButton label="Insert marker"><MarkerIcon /></ToolButton>
    <ToolButton label="Insert region"><RegionIcon /></ToolButton>
    <Separator />
    <ToolButton label="Enable snapping" active><SnapIcon /></ToolButton>
    <ToolButton label="Automatic crossfades" active><CrossfadeIcon /></ToolButton>
    <ToolButton label="Auto ripple"><RippleIcon /></ToolButton>
    <CaretButton label="Auto ripple options" />
    <ToolButton label="Lock envelopes to events" active><LockEnvelopesIcon /></ToolButton>
    <ToolButton label="Ignore event grouping"><IgnoreGroupingIcon /></ToolButton>
  </div>
);

const App = () => (
  <div className="flex h-screen flex-col overflow-hidden border-t-2 border-r border-b-2 border-l-[3px] border-black bg-[#222] font-['DejaVu_Sans_Condensed','DejaVu_Sans',sans-serif]">
    <TitleBar />
    <div className="flex min-h-0 flex-1 flex-col px-[3px] pt-[3px]">
      <MainToolbar />
      <main className="mt-[3px] flex min-h-0 flex-1 gap-[7px]">
        <Dock />
        <ProjectMedia />
        <VideoPreview />
        <MasterBus />
      </main>
      <div className="mt-[9px] flex h-[183px] shrink-0 gap-1">
        <TrackList />
        <div className="flex min-w-0 flex-1 flex-col">
          <div className="flex h-[133px]">
            <TimelineBody />
            <VerticalScroll />
          </div>
          <HorizontalScroll />
          <TransportBar />
        </div>
      </div>
      <footer className="mt-0.5 h-[19px] shrink-0 border-t border-[#4c4c4c] bg-[#373737]" />
    </div>
  </div>
);

export default App;
